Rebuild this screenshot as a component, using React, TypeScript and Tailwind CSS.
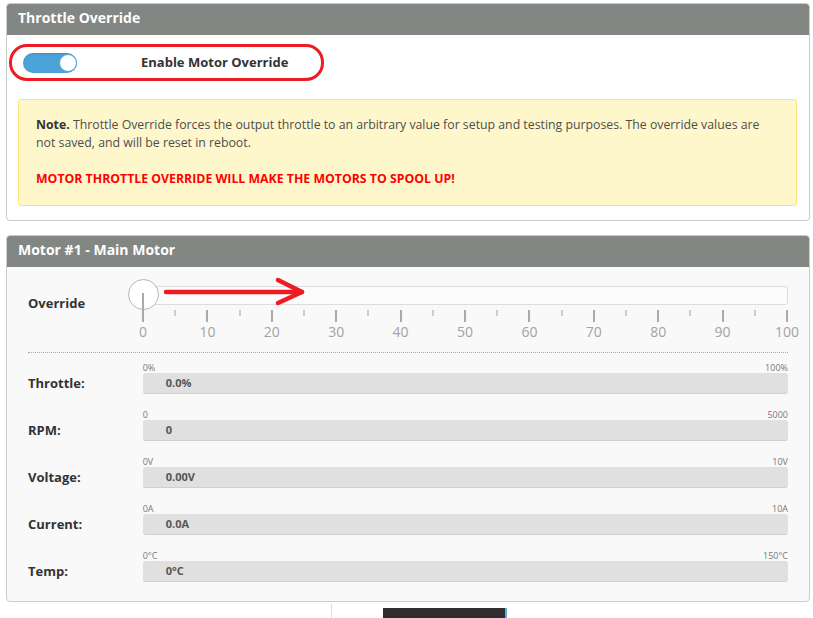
import React from 'react'

const ticks = Array.from({ length: 21 }, (_, i) => i * 5)

const readouts = [
  { label: 'Throttle:', min: '0%', max: '100%', value: '0.0%' },
  { label: 'RPM:', min: '0', max: '5000', value: '0' },
  { label: 'Voltage:', min: '0V', max: '10V', value: '0.00V' },
  { label: 'Current:', min: '0A', max: '10A', value: '0.0A' },
  { label: 'Temp:', min: '0°C', max: '150°C', value: '0°C' },
]

function PanelHeader({ title }: { title: string }) {
  return (
    <div className="h-[31px] bg-[#828784] px-[11px] flex items-center text-white font-bold text-[14px] leading-none pb-[3px]">
      {title}
    </div>
  )
}

function Toggle() {
  return (
    <div className="w-[54px] h-[20px] rounded-full bg-[#4ba3d9] relative shadow-[inset_0_1px_2px_rgba(0,0,0,0.15)]">
      <div className="absolute right-0 top-[1px] w-[18px] h-[18px] rounded-full bg-white border border-[#4ba3d9]" />
    </div>
  )
}

function OverrideSlider() {
  return (
    <div className="relative w-[645px]">
      <div className="h-[19px] mt-[19px] rounded-[3px] border border-[#dcdcdc] bg-[#fbfbfb]" />
      <div className="absolute left-[-15px] top-[12px] w-[31px] h-[31px] rounded-full bg-white border border-[#b5b5b5]" />
      {/* scale */}
      <div className="relative h-[46px]">
        {ticks.map((t) => {
          const major = t % 10 === 0
          return (
            <div key={t} className="absolute top-0" style={{ left: `${(t / 100) * 644}px` }}>
              <div
                className={
                  major
                    ? 'w-[2px] h-[12px] bg-[#aaaaaa] -ml-[1px] mt-[5px]'
                    : 'w-[2px] h-[6px] bg-[#cccccc] -ml-[1px] mt-[5px]'
                }
              />
              {major && (
                <div className="absolute top-[17px] left-0 -translate-x-1/2 text-[14px] text-[#a3a3a3] leading-[20px]">
                  {t}
                </div>
              )}
            </div>
          )
        })}
        <div className="absolute left-[-1px] top-[-12px] w-[2px] h-[18px] bg-[#aaaaaa]" />
      </div>
    </div>
  )
}

export default function App() {
  return (
    <div className="relative w-[813px] h-[618px] bg-white overflow-hidden font-['Open_Sans',sans-serif] text-[#333]">
      {/* Throttle Override panel */}
      <div className="ml-[6px] mr-[3px] mt-[3px] border border-[#cccccc] rounded-[4px] overflow-hidden bg-white">
        <PanelHeader title="Throttle Override" />
        <div className="pt-[18px] pb-[14px]">
          <div className="flex items-center pl-[16px] h-[20px]">
            <Toggle />
            <span className="ml-[64px] text-[13px] font-bold text-[#333]">Enable Motor Override</span>
          </div>
          <div className="mt-[26px] ml-[11px] mr-[12px] h-[107px] rounded-[3px] border border-[#ffe27a] bg-[#fff7cc] px-[17px] pt-[16px] text-[12.3px] leading-[18px] text-[#4d4d4d]">
            <p>
              <b className="text-[#333]">Note.</b> Throttle Override forces the output throttle to an arbitrary value for setup and testing purposes. The override values are not saved, and will be reset in reboot.
            </p>
            <p className="mt-[18px] font-bold text-[#ff0000]">MOTOR THROTTLE OVERRIDE WILL MAKE THE MOTORS TO SPOOL UP!</p>
          </div>
        </div>
      </div>

      {/* Motor panel */}
      <div className="ml-[6px] mr-[3px] mt-[14px] border border-[#cccccc] rounded-[4px] overflow-hidden bg-[#f9f9f9]">
        <PanelHeader title="Motor #1 - Main Motor" />
        <div className="px-[21px] pb-[19px]">
          <div className="flex">
            <div className="w-[115px] pt-[27px] text-[13px] font-bold text-[#333]">Override</div>
            <OverrideSlider />
          </div>
          <div className="border-t border-dotted border-[#aaaaaa] w-[760px] mt-[1px]" />
          <div className="flex flex-col gap-[15px] mt-[9px]">
            {readouts.map((r) => (
              <div key={r.label} className="flex items-end">
                <div className="w-[115px] h-[21px] flex items-center text-[13px] font-bold text-[#333]">{r.label}</div>
                <div className="w-[647px]">
                  <div className="h-[11px] flex justify-between items-center text-[9px] text-[#777] leading-none">
                    <span>{r.min}</span>
                    <span>{r.max}</span>
                  </div>
                  <div className="h-[21px] rounded-[3px] bg-[#e0e0e0] border-b border-[#cfcfcf] pl-[23px] flex items-center text-[11px] font-bold text-[#555]">
                    {r.value}
                  </div>
                </div>
              </div>
            ))}
          </div>
        </div>
      </div>

      {/* bottom strip */}
      <div className="flex h-[16px] mt-[1px]">
        <div className="w-[332px] h-[15px] border-r border-[#dddddd] mt-[1px]" />
        <div className="ml-[51px] mt-[5px] w-[124px] h-[11px] bg-[#2e2e2e] border-r-[2px] border-[#5aaee0]" />
      </div>

      {/* annotations */}
      <div className="absolute left-[9px] top-[44px] w-[315px] h-[37px] border-[3px] border-[#ed1c24] rounded-[18px] pointer-events-none" />
      <svg className="absolute left-0 top-0 pointer-events-none" width="813" height="618">
        <g stroke="#ed1c24" strokeWidth="4.5" fill="none" strokeLinecap="round" strokeLinejoin="round">
          <line x1="166" y1="292" x2="302" y2="292" />
          <polyline points="278,280 302,292 278,303" />
        </g>
      </svg>
    </div>
  )
}
